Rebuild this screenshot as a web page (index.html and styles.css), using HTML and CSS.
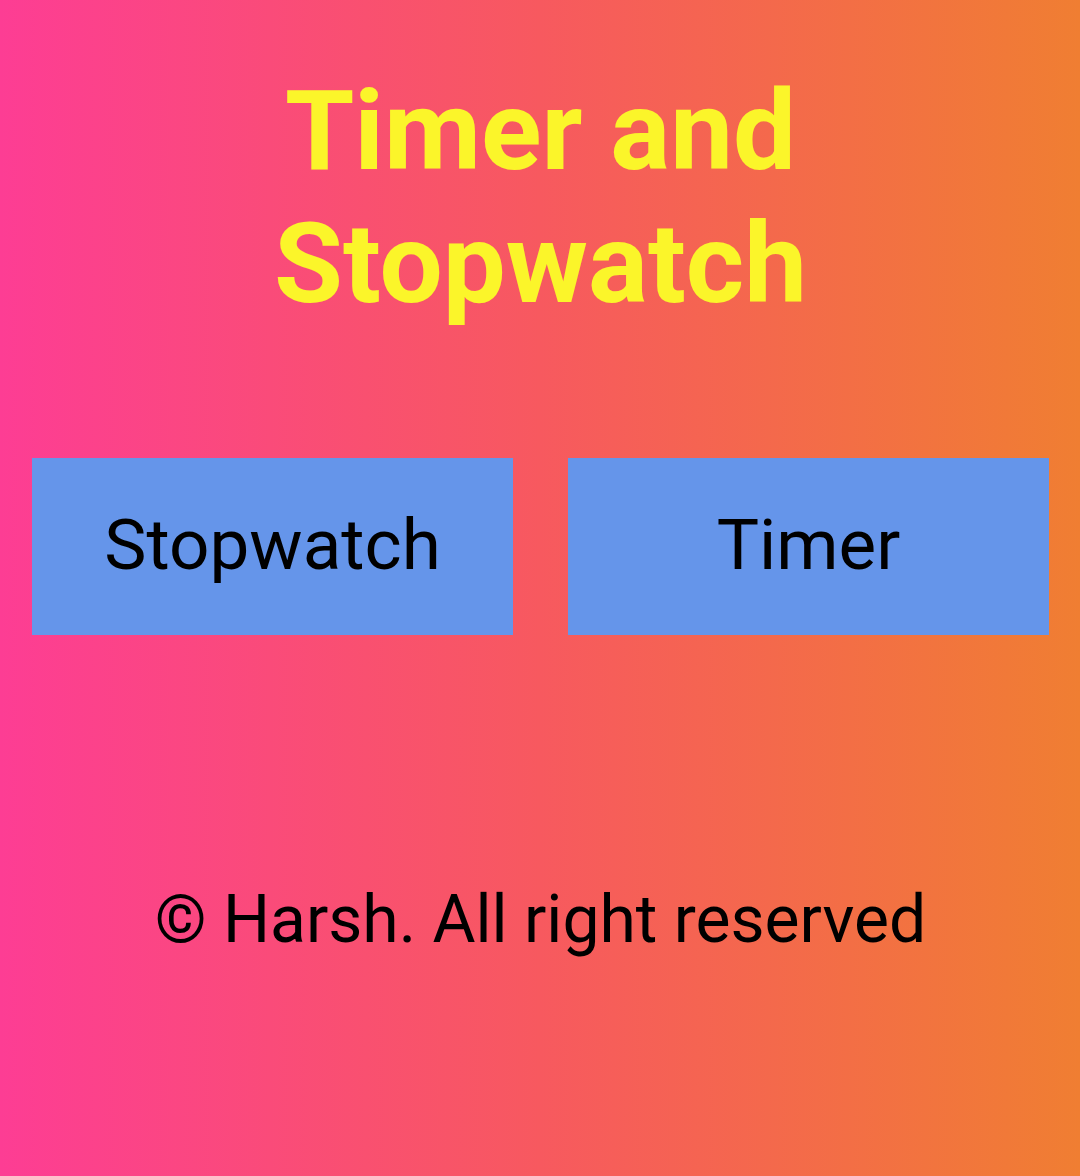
FILE: index.html
```html
<!DOCTYPE html>
<html lang="en">
<head>
<meta charset="utf-8">
<title>Timer and Stopwatch</title>
<link rel="stylesheet" href="styles.css">
</head>
<body>
<main class="page">
  <h1 class="title">Timer and<br>Stopwatch</h1>
  <div class="buttons">
    <button class="btn">Stopwatch</button>
    <button class="btn">Timer</button>
  </div>
  <p class="footer">© Harsh. All right reserved</p>
</main>
</body>
</html>
```

FILE: styles.css
```css
html, body {
  margin: 0;
  padding: 0;
}
body {
  width: 1080px;
  height: 1176px;
  background: linear-gradient(to right, #fd3d94 0%, #f7595f 50%, #f07e32 100%);
  font-family: Roboto, "Noto Sans", sans-serif;
  overflow: hidden;
}
.page {
  display: flex;
  flex-direction: column;
  align-items: center;
  padding: 64px 31px 0 32px;
}
.title {
  margin: 0;
  font-size: 112px;
  line-height: 133px;
  font-weight: 700;
  color: #fbf52a;
  text-align: center;
}
.buttons {
  margin-top: 128px;
  display: flex;
  gap: 55px;
  width: 100%;
}
.btn {
  flex: 1;
  height: 177px;
  border: none;
  border-radius: 0;
  background: #6595ea;
  color: #000;
  font-family: Roboto, "Noto Sans", sans-serif;
  font-size: 71px;
  font-weight: 400;
  padding: 0 0 5px;
}
.footer {
  margin: 246px 0 0;
  font-size: 66px;
  color: #000;
  text-align: center;
}
```
